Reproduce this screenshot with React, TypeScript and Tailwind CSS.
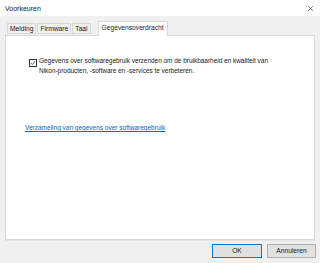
import { X } from "lucide-react";

const TABS = ["Melding", "Firmware", "Taal"];

export default function App() {
  return (
    <div
      className="w-[320px] h-[263px] bg-[#f0f0f0] flex flex-col text-[#1a1a1a] overflow-hidden"
      style={{ fontFamily: '"Liberation Sans", Arial, sans-serif' }}
    >
      {/* Title bar */}
      <div className="h-4 bg-white flex items-center justify-between pl-[5px] pr-[5px]">
        <span className="text-[7px] leading-none">Voorkeuren</span>
        <X className="w-[9px] h-[9px] text-[#333]" strokeWidth={1.5} />
      </div>

      {/* Tabs */}
      <div className="flex items-end pl-[7px] pt-1 h-[19px] gap-px">
        {TABS.map((t) => (
          <div
            key={t}
            className="h-[11px] px-[2px] border border-[#d9d9d9] bg-[#f0f0f0] text-[6.7px] leading-[9px] mb-[1px]"
          >
            {t}
          </div>
        ))}
        <div className="ml-[6px] h-[15px] px-[3px] bg-white border border-b-0 border-[#d9d9d9] text-[6.7px] leading-[11px] relative z-10 -mb-px">
          Gegevensoverdracht
        </div>
      </div>

      {/* Panel */}
      <div className="mx-[5px] h-[205px] bg-white border border-[#d9d9d9] shadow-[0_1px_0_#e3e3e3] pt-[20px] pl-[23px]">
        <div className="flex items-start gap-[2px]">
          <div className="mt-[3px] w-[8px] h-[8px] border border-[#333] flex items-center justify-center shrink-0">
            <svg viewBox="0 0 8 8" className="w-[6px] h-[6px]">
              <path d="M1 4 L3 6 L7 1.5" fill="none" stroke="#222" strokeWidth="1" />
            </svg>
          </div>
          <p className="text-[6.5px] tracking-[-0.03px] leading-[10px] w-[260px]">
            Gegevens over softwaregebruik verzenden om de bruikbaarheid en kwaliteit van
            <br />
            Nikon-producten, -software en -services te verbeteren.
          </p>
        </div>
        <div className="mt-[37px] -ml-[4px]">
          <span className="text-[6.5px] text-[#0066cc] underline">
            Verzameling van gegevens over softwaregebruik
          </span>
        </div>
      </div>

      {/* Buttons */}
      <div className="flex justify-end gap-[5px] pr-[4px] pt-[4px]">
        <button className="w-[50px] h-[14px] bg-[#e1e1e1] border border-[#0078d7] text-[6.7px] leading-none">
          OK
        </button>
        <button className="w-[49px] h-[14px] bg-[#e1e1e1] border border-[#adadad] text-[6.7px] leading-none">
          Annuleren
        </button>
      </div>
    </div>
  );
}
